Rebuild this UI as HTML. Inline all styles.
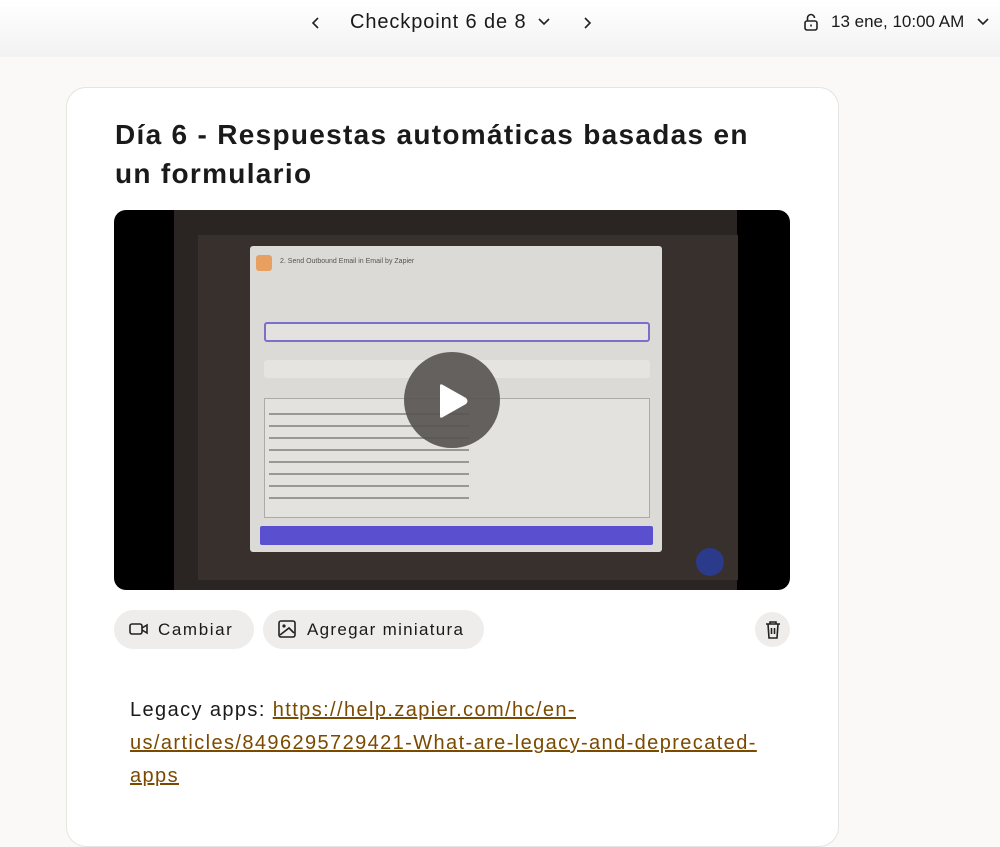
<!DOCTYPE html>
<html><head><meta charset="utf-8"><style>
*{margin:0;padding:0;box-sizing:border-box}
body{width:1000px;height:821px;overflow:hidden;background:#faf9f7;font-family:"Liberation Sans",sans-serif;color:#1a1a1a;position:relative}
.hdr{position:absolute;left:0;top:0;width:1000px;height:57px;background:linear-gradient(#ffffff,#f2f2f2)}
.t{position:absolute;white-space:nowrap}
.card{position:absolute;left:66px;top:87px;width:773px;height:760px;background:#fff;border:1px solid #e6e4e1;border-radius:20px}
.video{position:absolute;left:114px;top:210px;width:676px;height:380px;background:#000;border-radius:12px;overflow:hidden}
.btn{position:absolute;top:610px;height:39px;background:#eeedeb;border-radius:20px;font-size:17px;line-height:39px}
a{color:#7a4a00;text-decoration:underline}
</style></head><body>
<div class="hdr">
 <svg class="t" style="left:311px;top:15px" width="10" height="16" viewBox="0 0 10 16"><path d="M7 3 L2 8 L7 13" stroke="#222" stroke-width="1.6" fill="none"/></svg>
 <div class="t" style="left:350px;top:11px;font-size:20px;letter-spacing:0.9px">Checkpoint 6 de 8</div>
 <svg class="t" style="left:537px;top:17px" width="14" height="10" viewBox="0 0 14 10"><path d="M2 2 L7 7 L12 2" stroke="#222" stroke-width="1.6" fill="none"/></svg>
 <svg class="t" style="left:582px;top:15px" width="10" height="16" viewBox="0 0 10 16"><path d="M3 3 L8 8 L3 13" stroke="#222" stroke-width="1.6" fill="none"/></svg>
 <svg class="t" style="left:803px;top:12px" width="16" height="20" viewBox="0 0 16 20"><rect x="2" y="9" width="12" height="9" rx="2" stroke="#222" stroke-width="1.6" fill="none"/><path d="M4.5 9 V6 a3.5 3.5 0 0 1 7 0" stroke="#222" stroke-width="1.6" fill="none"/><path d="M8 12.5v2" stroke="#222" stroke-width="1.6"/></svg>
 <div class="t" style="left:831px;top:12px;font-size:17px;">13 ene, 10:00 AM</div>
 <svg class="t" style="left:976px;top:17px" width="14" height="10" viewBox="0 0 14 10"><path d="M2 2 L7 7 L12 2" stroke="#222" stroke-width="1.6" fill="none"/></svg>
</div>
<div class="card"></div>
<div class="t" style="left:115px;top:115px;font-size:28px;font-weight:bold;line-height:39px;letter-spacing:1.3px">Día 6 - Respuestas automáticas basadas en<br>un formulario</div>
<div class="video">
 <div style="position:absolute;left:60px;top:0;width:563px;height:380px;background:#2a2523"></div>
 <div style="position:absolute;left:84px;top:25px;width:540px;height:345px;background:#37302d"></div>
 <div style="position:absolute;left:136px;top:36px;width:412px;height:306px;background:#dcdad6;border-radius:3px"></div>
 <div style="position:absolute;left:142px;top:45px;width:16px;height:16px;background:#e8a060;border-radius:3px"></div>
 <div style="position:absolute;left:166px;top:48px;font-size:7px;color:#555">2. Send Outbound Email in Email by Zapier</div>
 <div style="position:absolute;left:150px;top:112px;width:386px;height:20px;border:2px solid #7a70c8;border-radius:3px;background:#e4e2de"></div>
 <div style="position:absolute;left:150px;top:150px;width:386px;height:18px;background:#e6e4e0;border-radius:3px"></div>
 <div style="position:absolute;left:150px;top:188px;width:386px;height:120px;border:1px solid #aaa;background:#e4e2de"></div>
 <div style="position:absolute;left:155px;top:195px;width:200px;height:100px;background:repeating-linear-gradient(#e4e2de 0 8px,#9a9894 8px 10px,#e4e2de 10px 12px)"></div>
 <div style="position:absolute;left:146px;top:316px;width:393px;height:19px;background:#5a4fcf;border-radius:2px"></div>
 <div style="position:absolute;left:582px;top:338px;width:28px;height:28px;background:#2b3a8a;border-radius:50%"></div>
 <div style="position:absolute;left:290px;top:142px;width:96px;height:96px;background:rgba(85,82,80,0.9);border-radius:50%"></div>
 <svg style="position:absolute;left:322px;top:173px" width="34" height="36" viewBox="0 0 34 36"><path d="M4 3 Q4 0 7 2 L30 15 Q33 18 30 21 L7 34 Q4 36 4 33 Z" fill="#fff"/></svg>
</div>
<div class="btn" style="left:114px;width:140px;">
 <svg style="position:absolute;left:15px;top:11px" width="20" height="16" viewBox="0 0 20 16"><rect x="1" y="3" width="12" height="10" rx="2" stroke="#222" stroke-width="1.6" fill="none"/><path d="M13 7 L18 4 V12 L13 9" stroke="#222" stroke-width="1.6" fill="none"/></svg>
 <span style="position:absolute;left:44px;letter-spacing:1.6px">Cambiar</span></div>
<div class="btn" style="left:263px;width:221px;">
 <svg style="position:absolute;left:15px;top:10px" width="18" height="18" viewBox="0 0 18 18"><rect x="1" y="1" width="16" height="16" rx="2" stroke="#222" stroke-width="1.6" fill="none"/><circle cx="6" cy="6" r="1.6" fill="#222"/><path d="M2 15 L11 8 L16 13" stroke="#222" stroke-width="1.6" fill="none"/></svg>
 <span style="position:absolute;left:44px;letter-spacing:1.3px">Agregar miniatura</span></div>
<div style="position:absolute;left:755px;top:612px;width:35px;height:35px;border-radius:50%;background:#eeedeb"></div>
<svg class="t" style="left:764px;top:620px" width="18" height="20" viewBox="0 0 18 20"><path d="M2 4 H16 M6 4 V2 H12 V4 M4 4 L5 18 H13 L14 4 M7.5 8 V14 M10.5 8 V14" stroke="#222" stroke-width="1.6" fill="none"/></svg>
<div class="t" style="left:130px;top:694px;font-size:20px;line-height:33px;letter-spacing:1.4px">Legacy apps: <a>https://help.zapier.com/hc/en-</a><br><a>us/articles/8496295729421-What-are-legacy-and-deprecated-</a><br><a>apps</a></div>
</body></html>
